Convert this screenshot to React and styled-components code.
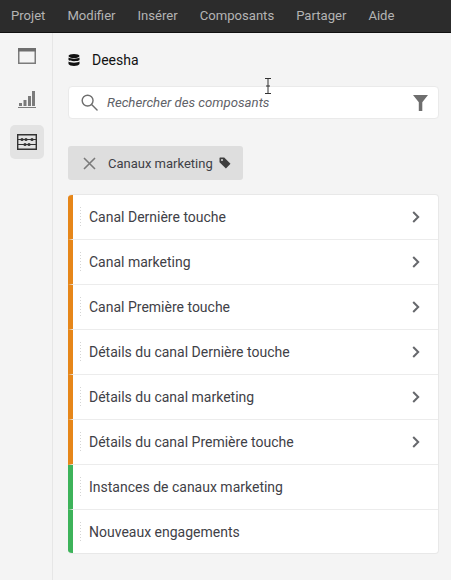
import React from 'react'
import styled, { createGlobalStyle } from 'styled-components'

const Global = createGlobalStyle`
  html, body { margin: 0; padding: 0; }
  body {
    width: 451px;
    height: 580px;
    overflow: hidden;
    background: #f4f4f4;
    font-family: "Roboto", "Open Sans", sans-serif;
  }
`

const Page = styled.div`
  position: relative;
  width: 451px;
  height: 580px;
  display: flex;
  flex-direction: column;
`

const MenuBar = styled.nav`
  flex: none;
  display: flex;
  align-items: center;
  gap: 22px;
  padding-left: 11px;
  padding-bottom: 1px;
  height: 31px;
  background: #2c2c2c;
  border-bottom: 1px solid #111;
`

const MenuItem = styled.span`
  color: #b4b4b4;
  font-size: 13.1px;
  line-height: 30px;
`

const Body = styled.div`
  flex: 1;
  display: flex;
  min-height: 0;
`

const Rail = styled.aside`
  width: 53px;
  flex: none;
  box-sizing: border-box;
  border-right: 1px solid #e6e6e6;
  padding: 6px 0 0 10px;
  display: flex;
  flex-direction: column;
  gap: 9px;
`

const RailButton = styled.div`
  width: 34px;
  height: 34px;
  border-radius: 5px;
  display: flex;
  align-items: center;
  justify-content: center;
  background: ${p => (p.$active ? '#e3e3e3' : 'transparent')};
`

const Main = styled.main`
  flex: 1;
  box-sizing: border-box;
  padding: 15px 12px 0 15px;
`

const Title = styled.div`
  height: 24px;
  display: flex;
  align-items: center;
  gap: 12px;
  color: #111;
  font-size: 14px;
  margin-bottom: 14px;
`

const Search = styled.div`
  height: 33px;
  box-sizing: border-box;
  display: flex;
  align-items: center;
  padding: 0 10px 0 12px;
  background: #fff;
  border: 1px solid #eaeaea;
  border-radius: 4px;
  margin-bottom: 27px;
`

const SearchText = styled.span`
  flex: 1;
  margin-left: 9px;
  margin-bottom: 1px;
  color: #5f6268;
  font-size: 13.2px;
  font-style: italic;
`

const Tag = styled.div`
  width: fit-content;
  height: 34px;
  box-sizing: border-box;
  display: flex;
  align-items: center;
  padding: 0 12px 0 15px;
  background: #dedede;
  border-radius: 3px;
  margin-bottom: 14px;
`

const TagLabel = styled.span`
  margin: 0 6px 0 12px;
  color: #3f4147;
  font-size: 13px;
`

const List = styled.div`
  display: flex;
  flex-direction: column;
  background: #fff;
  border: 1px solid #e8e8e8;
  border-left: none;
  border-radius: 4px;
  overflow: hidden;
`

const Row = styled.div`
  position: relative;
  height: 45px;
  box-sizing: border-box;
  display: flex;
  align-items: center;
  padding: 0 18px 0 16px;
  border-left: 5px solid ${p => p.$color};
  border-bottom: 1px solid #ececec;
  &:last-child { border-bottom: none; height: 43px; }
`

const Grip = styled.span`
  position: absolute;
  left: 7px;
  top: 12px;
  width: 1px;
  height: 19px;
  background: repeating-linear-gradient(#d4d4d4 0 1px, transparent 1px 3px);
`

const RowLabel = styled.span`
  flex: 1;
  color: #3f4147;
  font-size: 14px;
`

const Caret = styled.div`
  position: absolute;
  left: 263px;
  top: 78px;
`

const PanelIcon = () => (
  <svg width="18" height="16" viewBox="0 0 18 16">
    <rect x="0.75" y="0.75" width="16.5" height="14.5" fill="none" stroke="#7b7b7b" strokeWidth="1.5" />
    <rect x="0" y="0" width="18" height="3.5" fill="#6e6e6e" />
  </svg>
)

const BarsIcon = () => (
  <svg width="18" height="18" viewBox="0 0 18 18" fill="#7b7b7b">
    <rect x="1" y="13" width="3" height="3" />
    <rect x="5.5" y="10" width="3" height="6" />
    <rect x="10" y="6" width="3" height="10" />
    <rect x="14" y="1" width="3" height="15" />
    <rect x="0" y="17" width="18" height="1" />
  </svg>
)

const ChannelsIcon = () => (
  <svg width="20" height="16" viewBox="0 0 20 16" fill="#333">
    <path fillRule="evenodd" d="M0 0h20v16H0zM1.4 1.4v13.2h17.2V1.4z" />
    <rect x="1" y="5" width="18" height="1" />
    <rect x="1" y="10" width="18" height="1" />
    <circle cx="5" cy="5.5" r="1.6" />
    <circle cx="9" cy="5.5" r="1.6" />
    <circle cx="15" cy="5.5" r="1.6" />
    <circle cx="8" cy="10.5" r="1.6" />
    <circle cx="12" cy="10.5" r="1.6" />
  </svg>
)

const DatabaseIcon = () => (
  <svg width="12" height="12" viewBox="0 0 12 12" fill="#111">
    <ellipse cx="6" cy="2" rx="5.5" ry="2" />
    <path d="M.5 3.6C1.5 5 10.5 5 11.5 3.6V6c-1 1.6-10 1.6-11 0z" />
    <path d="M.5 7.6C1.5 9 10.5 9 11.5 7.6V10c-1 2.6-10 2.6-11 0z" />
  </svg>
)

const SearchIcon = () => (
  <svg width="17" height="17" viewBox="0 0 18 18" fill="none" stroke="#6e6e6e" strokeWidth="1.5">
    <circle cx="7" cy="7" r="5.75" />
    <path d="M11.2 11.2 17 17" strokeLinecap="round" />
  </svg>
)

const FilterIcon = () => (
  <svg width="15" height="16" viewBox="0 0 15 16" fill="#6e6e6e">
    <path d="M0 0h15L9.3 7.2V16H5.8V7.2z" />
  </svg>
)

const CloseIcon = () => (
  <svg width="13" height="13" viewBox="0 0 13 13" stroke="#7a7a7a" strokeWidth="1.6" fill="none">
    <path d="M1 1l11 11M12 1 1 12" />
  </svg>
)

const TagIcon = () => (
  <svg width="12" height="12" viewBox="0 0 12 12" fill="#3f3f3f">
    <path fillRule="evenodd" d="M1 .5h4.2l6.3 6.3-4.6 4.7L.5 5.2V1zM3 2a1 1 0 1 0 0 2 1 1 0 0 0 0-2z" />
  </svg>
)

const ChevronIcon = () => (
  <svg width="8" height="12" viewBox="0 0 8 12" fill="none" stroke="#66686c" strokeWidth="2">
    <path d="M1.2 1 6.2 6l-5 5" />
  </svg>
)

const IBeam = () => (
  <svg width="10" height="16" viewBox="0 0 10 16" fill="none" stroke="#333" strokeWidth="1">
    <path d="M2 .5h6M5 .5v15M2 15.5h6M3 8h4" />
  </svg>
)

const menu = ['Projet', 'Modifier', 'Insérer', 'Composants', 'Partager', 'Aide']

const rows = [
  { label: 'Canal Dernière touche', color: '#e68619', more: true },
  { label: 'Canal marketing', color: '#e68619', more: true },
  { label: 'Canal Première touche', color: '#e68619', more: true },
  { label: 'Détails du canal Dernière touche', color: '#e68619', more: true },
  { label: 'Détails du canal marketing', color: '#e68619', more: true },
  { label: 'Détails du canal Première touche', color: '#e68619', more: true },
  { label: 'Instances de canaux marketing', color: '#3db35a' },
  { label: 'Nouveaux engagements', color: '#3db35a' },
]

const App = () => {
  return (
    <Page>
      <Global />
      <MenuBar>
        {menu.map(m => <MenuItem key={m}>{m}</MenuItem>)}
      </MenuBar>
      <Body>
        <Rail>
          <RailButton><PanelIcon /></RailButton>
          <RailButton><BarsIcon /></RailButton>
          <RailButton $active><ChannelsIcon /></RailButton>
        </Rail>
        <Main>
          <Title><DatabaseIcon />Deesha</Title>
          <Search>
            <SearchIcon />
            <SearchText>Rechercher des composants</SearchText>
            <FilterIcon />
          </Search>
          <Tag>
            <CloseIcon />
            <TagLabel>Canaux marketing</TagLabel>
            <TagIcon />
          </Tag>
          <List>
            {rows.map(r => (
              <Row key={r.label} $color={r.color}>
                <Grip />
                <RowLabel>{r.label}</RowLabel>
                {r.more && <ChevronIcon />}
              </Row>
            ))}
          </List>
        </Main>
      </Body>
      <Caret><IBeam /></Caret>
    </Page>
  )
}

export default App
